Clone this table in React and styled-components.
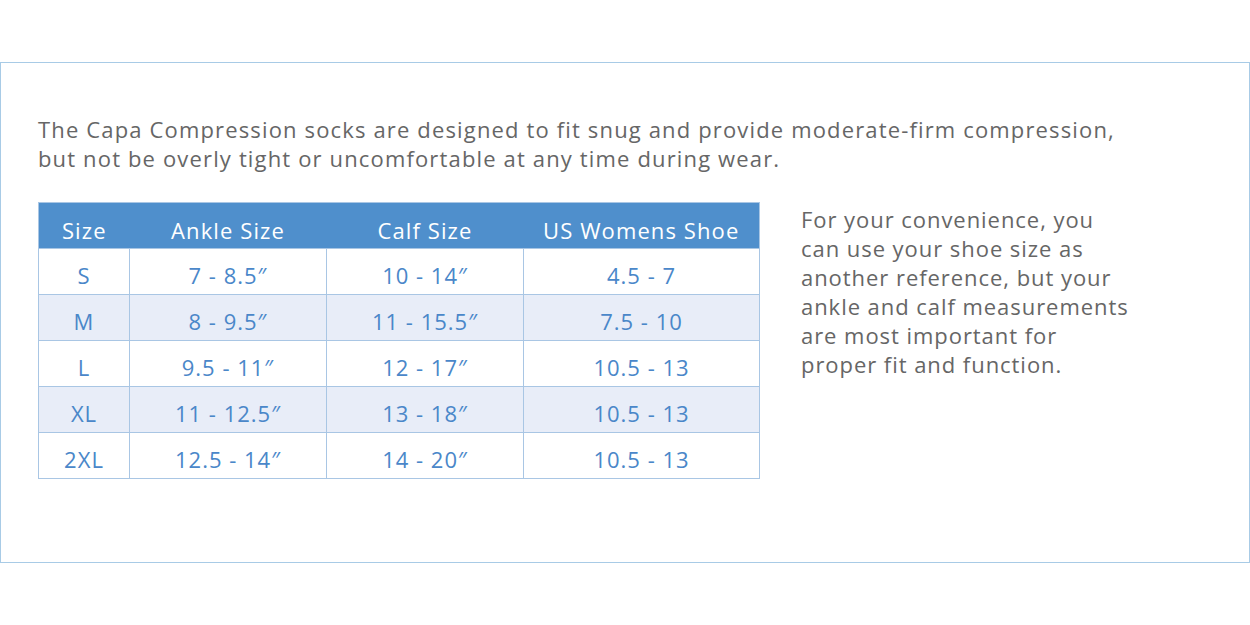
import React from 'react';
import styled, { createGlobalStyle } from 'styled-components';

const GlobalStyle = createGlobalStyle`
  body {
    margin: 0;
    background: #fff;
    font-family: 'Open Sans', 'Lato', sans-serif;
  }
`;

const Page = styled.div`
  width: 1250px;
  height: 625px;
  padding-top: 62px;
  box-sizing: border-box;
`;

const Frame = styled.section`
  width: 1250px;
  height: 501px;
  box-sizing: border-box;
  border: 1px solid #a8cbe6;
  padding: 52px 0 0 37px;
`;

const Intro = styled.p`
  margin: 0 0 29px;
  font-size: 22px;
  line-height: 29px;
  letter-spacing: 1.15px;
  color: #666;
`;

const Body = styled.div`
  display: flex;
  align-items: flex-start;
  gap: 41px;
`;

const Table = styled.table`
  border-collapse: collapse;
  border: 1px solid #a9c6e4;
  table-layout: fixed;
  width: 721px;
`;

const HeadCell = styled.th`
  background: #4f8fcc;
  color: #fff;
  font-weight: 400;
  font-size: 22px;
  letter-spacing: 1.1px;
  height: 46px;
  padding: 8px 0 0;
  box-sizing: border-box;
  text-align: center;
`;

const Row = styled.tr`
  background: ${({ $alt }) => ($alt ? '#e8edf8' : '#fff')};
`;

const Cell = styled.td`
  border: 1px solid #a9c6e4;
  color: #4a87c9;
  font-size: 22px;
  letter-spacing: 1px;
  height: 46px;
  padding: 7px 0 0;
  box-sizing: border-box;
  text-align: center;
`;

const Note = styled.p`
  margin: 3px 0 0;
  font-size: 22px;
  line-height: 29px;
  letter-spacing: 0.95px;
  color: #666;
`;

const columns = [
  { label: 'Size', width: 91 },
  { label: 'Ankle Size', width: 197 },
  { label: 'Calf Size', width: 197 },
  { label: 'US Womens Shoe', width: 236 },
];

const rows = [
  ['S', '7 - 8.5\u2033', '10 - 14\u2033', '4.5 - 7'],
  ['M', '8 - 9.5\u2033', '11 - 15.5\u2033', '7.5 - 10'],
  ['L', '9.5 - 11\u2033', '12 - 17\u2033', '10.5 - 13'],
  ['XL', '11 - 12.5\u2033', '13 - 18\u2033', '10.5 - 13'],
  ['2XL', '12.5 - 14\u2033', '14 - 20\u2033', '10.5 - 13'],
];

const App = () => {
  return (
    <>
      <GlobalStyle />
      <Page>
        <Frame>
          <Intro>
            The Capa Compression socks are designed to fit snug and provide moderate-firm compression,
            <br />
            but not be overly tight or uncomfortable at any time during wear.
          </Intro>
          <Body>
            <Table>
              <colgroup>
                {columns.map((c) => (
                  <col key={c.label} style={{ width: c.width }} />
                ))}
              </colgroup>
              <thead>
                <tr>
                  {columns.map((c) => (
                    <HeadCell key={c.label}>{c.label}</HeadCell>
                  ))}
                </tr>
              </thead>
              <tbody>
                {rows.map((r, i) => (
                  <Row key={r[0]} $alt={i % 2 === 1}>
                    {r.map((v, j) => (
                      <Cell key={j}>{v}</Cell>
                    ))}
                  </Row>
                ))}
              </tbody>
            </Table>
            <Note>
              For your convenience, you
              <br />
              can use your shoe size as
              <br />
              another reference, but your
              <br />
              ankle and calf measurements
              <br />
              are most important for
              <br />
              proper fit and function.
            </Note>
          </Body>
        </Frame>
      </Page>
    </>
  );
};

export default App;
